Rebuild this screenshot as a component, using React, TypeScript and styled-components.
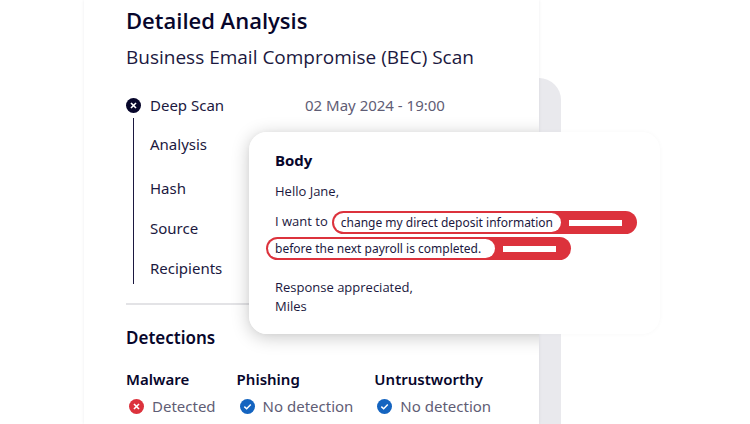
import React from "react";
import styled, { createGlobalStyle } from "styled-components";

const GlobalStyle = createGlobalStyle`
  * { box-sizing: border-box; }
  body {
    margin: 0;
    background: #ffffff;
    color: #1b1840;
    font-family: "Noto Sans", "Open Sans", sans-serif;
  }
  h1, h2, h3, p, dl, dd, dt, ul { margin: 0; padding: 0; }
`;

const Page = styled.main`
  display: grid;
  min-height: 100vh;
  padding: 0 211px 0 84px;
  overflow: hidden;
`;

const Stage = styled.div`
  position: relative;
  display: grid;
`;

const Backdrop = styled.div`
  position: absolute;
  top: 78px;
  right: -22px;
  bottom: 0;
  width: 60px;
  border-top-right-radius: 22px;
  background: #e9e9ed;
`;

const Report = styled.section`
  position: relative;
  padding: 5px 42px 0;
  overflow: hidden;
  background: #ffffff;
  box-shadow: 0 0 3px rgba(20, 20, 50, 0.08);
`;

const Title = styled.h1`
  color: #07062b;
  font-family: "Open Sans", "Noto Sans", sans-serif;
  font-size: 22px;
  font-weight: 600;
  line-height: 30px;
`;

const Subtitle = styled.p`
  margin-top: 9px;
  font-family: "Open Sans", "Noto Sans", sans-serif;
  font-size: 19px;
  line-height: 26px;
`;

const Timeline = styled.div`
  display: grid;
  grid-template-columns: 15px 1fr;
  column-gap: 9px;
  margin-top: 25px;
  font-size: 15px;
  line-height: 20px;
`;

const Rail = styled.div`
  display: flex;
  flex-direction: column;
  align-items: center;
  padding-top: 3px;
  gap: 5px;
`;

const RailLine = styled.div`
  flex: 1;
  width: 1px;
  background: #1b1840;
`;

const ScanRow = styled.div`
  display: grid;
  grid-template-columns: 155px 1fr;
`;

const Muted = styled.span`
  color: #5f5d75;
`;

const Steps = styled.ul`
  display: grid;
  gap: 20px;
  padding: 19px 0 6px;
  list-style: none;
`;

const Step = styled.li<{ $spaced?: boolean }>`
  padding-top: ${(p) => (p.$spaced ? 4 : 0)}px;
`;

const Divider = styled.hr`
  height: 2px;
  margin: 19px 0 0;
  border: 0;
  background: #e3e3e6;
`;

const SectionTitle = styled.h2`
  margin-top: 21px;
  color: #07062b;
  font-size: 17px;
  font-weight: 600;
  line-height: 24px;
`;

const Detections = styled.dl`
  display: flex;
  gap: 21px;
  margin-top: 18px;
  font-size: 15px;
  white-space: nowrap;
`;

const DetectionName = styled.dt`
  color: #07062b;
  font-weight: 600;
  line-height: 22px;
`;

const DetectionResult = styled.dd`
  display: flex;
  align-items: center;
  gap: 8px;
  margin: 5px 0 0;
  padding-left: 3px;
  color: #5f5d75;
  line-height: 22px;
`;

const MessageShade = styled.div`
  position: absolute;
  top: 132px;
  left: 165px;
  right: -121px;
  height: 202px;
  border-radius: 18px;
  box-shadow: 0 3px 18px rgba(0, 0, 0, 0.22);
`;

const Message = styled.article`
  position: absolute;
  top: 132px;
  left: 165px;
  right: -121px;
  padding: 17px 26px 18px;
  border-radius: 18px;
  background: #ffffff;
  box-shadow: 0 0 5px rgba(0, 0, 0, 0.03);
  font-family: "Open Sans", "Noto Sans", sans-serif;
  font-size: 13px;
  line-height: 20px;
  white-space: nowrap;
`;

const MessageTitle = styled.h3`
  color: #07062b;
  font-size: 15px;
  font-weight: 700;
  line-height: 22px;
`;

const Greeting = styled.p`
  margin-top: 10px;
`;

const FlaggedText = styled.div`
  display: grid;
  justify-items: start;
  gap: 3px;
  margin-top: 10px;
`;

const FlaggedLine = styled.p<{ $outdent?: boolean }>`
  display: flex;
  gap: 4px;
  margin-left: ${(p) => (p.$outdent ? -9 : 0)}px;
`;

const Flag = styled.mark`
  display: flex;
  align-items: center;
  gap: 8px;
  padding: 2px 15px 2px 2px;
  border-radius: 12px;
  background: #dc323c;
  color: inherit;
  font-family: "Noto Sans", "Open Sans", sans-serif;
  font-size: 12px;
`;

const FlagText = styled.span<{ $wide?: boolean }>`
  padding: 0 ${(p) => (p.$wide ? 14 : 8)}px 0 7px;
  border-radius: 10px;
  background: #ffffff;
  line-height: 19px;
`;

const FlagBar = styled.span`
  width: 53px;
  height: 6px;
  background: #ffffff;
`;

const SignOff = styled.p`
  margin-top: 18px;
  line-height: 19px;
`;

const Badge = styled.svg`
  flex: none;
  width: 15px;
  height: 15px;
`;

function CrossBadge({ color }: { color: string }) {
  return (
    <Badge viewBox="0 0 16 16" aria-hidden="true">
      <circle cx="8" cy="8" r="8" fill={color} />
      <path d="M5.9 5.9l4.2 4.2M10.1 5.9l-4.2 4.2" stroke="#fff" strokeWidth="1.7" strokeLinecap="square" />
    </Badge>
  );
}

function CheckBadge() {
  return (
    <Badge viewBox="0 0 16 16" aria-hidden="true">
      <circle cx="8" cy="8" r="8" fill="#1464c0" />
      <path d="M4.6 8.1l2.5 2.3 4.4-4.5" fill="none" stroke="#fff" strokeWidth="1.6" />
    </Badge>
  );
}

const detections = [
  { name: "Malware", found: true },
  { name: "Phishing", found: false },
  { name: "Untrustworthy", found: false },
];

export default function App() {
  return (
    <Page>
      <GlobalStyle />
      <Stage>
        <Backdrop />
        <Report>
          <Title>Detailed Analysis</Title>
          <Subtitle>Business Email Compromise (BEC) Scan</Subtitle>
          <Timeline>
            <Rail>
              <CrossBadge color="#07062b" />
              <RailLine />
            </Rail>
            <div>
              <ScanRow>
                <span>Deep Scan</span>
                <Muted>02 May 2024 - 19:00</Muted>
              </ScanRow>
              <Steps>
                <Step>Analysis</Step>
                <Step $spaced>Hash</Step>
                <Step>Source</Step>
                <Step>Recipients</Step>
              </Steps>
            </div>
          </Timeline>
          <Divider />
          <SectionTitle>Detections</SectionTitle>
          <Detections>
            {detections.map((d) => (
              <div key={d.name}>
                <DetectionName>{d.name}</DetectionName>
                <DetectionResult>
                  {d.found ? <CrossBadge color="#dc323c" /> : <CheckBadge />}
                  {d.found ? "Detected" : "No detection"}
                </DetectionResult>
              </div>
            ))}
          </Detections>
          <MessageShade />
        </Report>
        <Message>
          <MessageTitle>Body</MessageTitle>
          <Greeting>Hello Jane,</Greeting>
          <FlaggedText>
            <FlaggedLine>
              I want to
              <Flag>
                <FlagText>change my direct deposit information</FlagText>
                <FlagBar />
              </Flag>
            </FlaggedLine>
            <FlaggedLine $outdent>
              <Flag>
                <FlagText $wide>before the next payroll is completed.</FlagText>
                <FlagBar />
              </Flag>
            </FlaggedLine>
          </FlaggedText>
          <SignOff>
            Response appreciated,
            <br />
            Miles
          </SignOff>
        </Message>
      </Stage>
    </Page>
  );
}
